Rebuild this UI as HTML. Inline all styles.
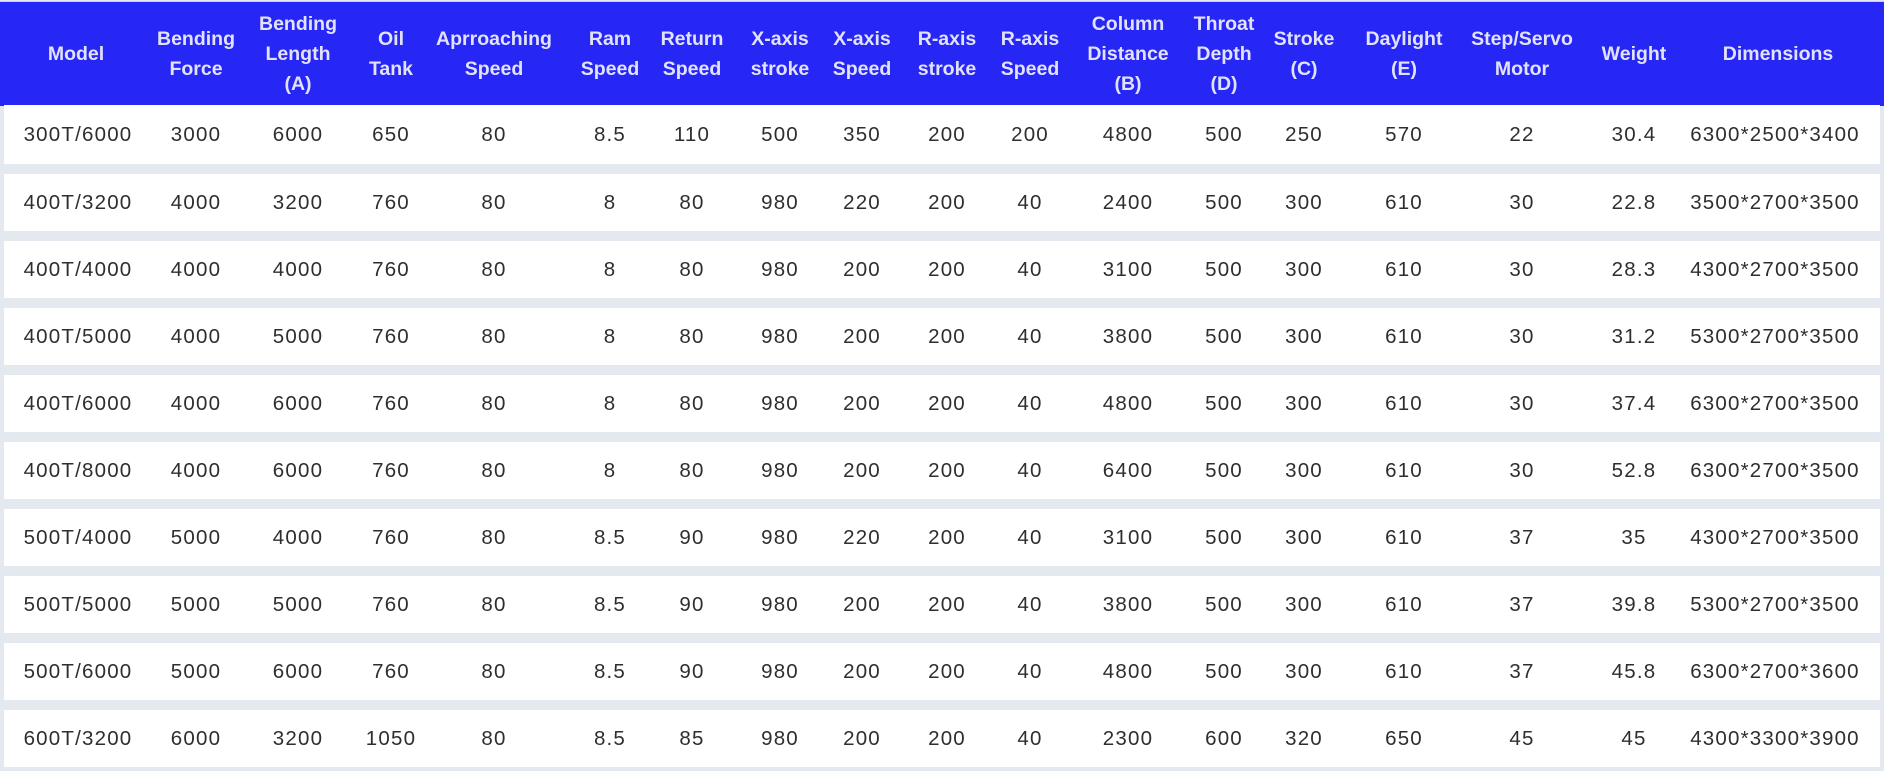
<!DOCTYPE html>
<html><head><meta charset="utf-8"><style>
html,body{margin:0;padding:0;width:1884px;height:771px;overflow:hidden;background:#e4e9ef;font-family:"Liberation Sans",Arial,sans-serif}
.hd{position:absolute;left:0;top:1px;width:1884px;height:104px;background:#2626f5;border-top:1px solid #c8c8ff}
.row{position:absolute;left:4px;width:1876px;display:grid;background:#fff}
.g{grid-template-columns:148px 88px 116px 70px 136px 96px 68px 108px 56px 114px 52px 144px 48px 112px 88px 148px 76px 206px}
.hd.g{display:grid;grid-template-columns:152px 88px 116px 70px 136px 96px 68px 108px 56px 114px 52px 144px 48px 112px 88px 148px 76px 212px}
.c{display:flex;justify-content:center;align-items:center;white-space:nowrap;text-align:center}
.hd .c{color:#e2e2ff;font-size:19.5px;font-weight:bold;line-height:30px}
.row .c{color:#2e2e2e;font-size:20.5px;letter-spacing:1.2px}
</style></head><body>
<div class="hd g">
<div class="c">Model</div><div class="c">Bending<br>Force</div><div class="c">Bending<br>Length<br>(A)</div><div class="c">Oil<br>Tank</div><div class="c">Aprroaching<br>Speed</div><div class="c">Ram<br>Speed</div><div class="c">Return<br>Speed</div><div class="c">X-axis<br>stroke</div><div class="c">X-axis<br>Speed</div><div class="c">R-axis<br>stroke</div><div class="c">R-axis<br>Speed</div><div class="c">Column<br>Distance<br>(B)</div><div class="c">Throat<br>Depth<br>(D)</div><div class="c">Stroke<br>(C)</div><div class="c">Daylight<br>(E)</div><div class="c">Step/Servo<br>Motor</div><div class="c">Weight</div><div class="c">Dimensions</div>
</div>
<div class="row g" style="top:105px;height:59px"><div class="c">300T/6000</div><div class="c">3000</div><div class="c">6000</div><div class="c">650</div><div class="c">80</div><div class="c">8.5</div><div class="c">110</div><div class="c">500</div><div class="c">350</div><div class="c">200</div><div class="c">200</div><div class="c">4800</div><div class="c">500</div><div class="c">250</div><div class="c">570</div><div class="c">22</div><div class="c">30.4</div><div class="c">6300*2500*3400</div></div>
<div class="row g" style="top:174px;height:57px"><div class="c">400T/3200</div><div class="c">4000</div><div class="c">3200</div><div class="c">760</div><div class="c">80</div><div class="c">8</div><div class="c">80</div><div class="c">980</div><div class="c">220</div><div class="c">200</div><div class="c">40</div><div class="c">2400</div><div class="c">500</div><div class="c">300</div><div class="c">610</div><div class="c">30</div><div class="c">22.8</div><div class="c">3500*2700*3500</div></div>
<div class="row g" style="top:241px;height:57px"><div class="c">400T/4000</div><div class="c">4000</div><div class="c">4000</div><div class="c">760</div><div class="c">80</div><div class="c">8</div><div class="c">80</div><div class="c">980</div><div class="c">200</div><div class="c">200</div><div class="c">40</div><div class="c">3100</div><div class="c">500</div><div class="c">300</div><div class="c">610</div><div class="c">30</div><div class="c">28.3</div><div class="c">4300*2700*3500</div></div>
<div class="row g" style="top:308px;height:57px"><div class="c">400T/5000</div><div class="c">4000</div><div class="c">5000</div><div class="c">760</div><div class="c">80</div><div class="c">8</div><div class="c">80</div><div class="c">980</div><div class="c">200</div><div class="c">200</div><div class="c">40</div><div class="c">3800</div><div class="c">500</div><div class="c">300</div><div class="c">610</div><div class="c">30</div><div class="c">31.2</div><div class="c">5300*2700*3500</div></div>
<div class="row g" style="top:375px;height:57px"><div class="c">400T/6000</div><div class="c">4000</div><div class="c">6000</div><div class="c">760</div><div class="c">80</div><div class="c">8</div><div class="c">80</div><div class="c">980</div><div class="c">200</div><div class="c">200</div><div class="c">40</div><div class="c">4800</div><div class="c">500</div><div class="c">300</div><div class="c">610</div><div class="c">30</div><div class="c">37.4</div><div class="c">6300*2700*3500</div></div>
<div class="row g" style="top:442px;height:57px"><div class="c">400T/8000</div><div class="c">4000</div><div class="c">6000</div><div class="c">760</div><div class="c">80</div><div class="c">8</div><div class="c">80</div><div class="c">980</div><div class="c">200</div><div class="c">200</div><div class="c">40</div><div class="c">6400</div><div class="c">500</div><div class="c">300</div><div class="c">610</div><div class="c">30</div><div class="c">52.8</div><div class="c">6300*2700*3500</div></div>
<div class="row g" style="top:509px;height:57px"><div class="c">500T/4000</div><div class="c">5000</div><div class="c">4000</div><div class="c">760</div><div class="c">80</div><div class="c">8.5</div><div class="c">90</div><div class="c">980</div><div class="c">220</div><div class="c">200</div><div class="c">40</div><div class="c">3100</div><div class="c">500</div><div class="c">300</div><div class="c">610</div><div class="c">37</div><div class="c">35</div><div class="c">4300*2700*3500</div></div>
<div class="row g" style="top:576px;height:57px"><div class="c">500T/5000</div><div class="c">5000</div><div class="c">5000</div><div class="c">760</div><div class="c">80</div><div class="c">8.5</div><div class="c">90</div><div class="c">980</div><div class="c">200</div><div class="c">200</div><div class="c">40</div><div class="c">3800</div><div class="c">500</div><div class="c">300</div><div class="c">610</div><div class="c">37</div><div class="c">39.8</div><div class="c">5300*2700*3500</div></div>
<div class="row g" style="top:643px;height:57px"><div class="c">500T/6000</div><div class="c">5000</div><div class="c">6000</div><div class="c">760</div><div class="c">80</div><div class="c">8.5</div><div class="c">90</div><div class="c">980</div><div class="c">200</div><div class="c">200</div><div class="c">40</div><div class="c">4800</div><div class="c">500</div><div class="c">300</div><div class="c">610</div><div class="c">37</div><div class="c">45.8</div><div class="c">6300*2700*3600</div></div>
<div class="row g" style="top:710px;height:57px"><div class="c">600T/3200</div><div class="c">6000</div><div class="c">3200</div><div class="c">1050</div><div class="c">80</div><div class="c">8.5</div><div class="c">85</div><div class="c">980</div><div class="c">200</div><div class="c">200</div><div class="c">40</div><div class="c">2300</div><div class="c">600</div><div class="c">320</div><div class="c">650</div><div class="c">45</div><div class="c">45</div><div class="c">4300*3300*3900</div></div>
</body></html>
